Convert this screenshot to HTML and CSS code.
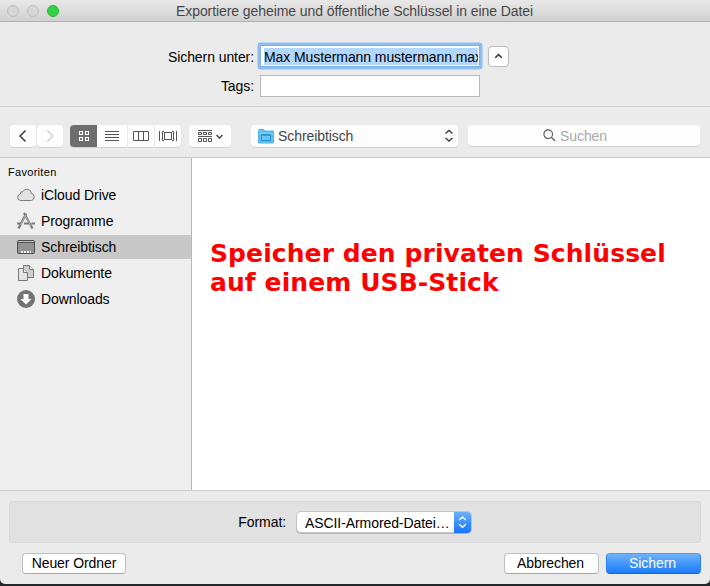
FILE: index.html
```html
<!DOCTYPE html>
<html lang="de">
<head>
<meta charset="utf-8">
<title>Exportiere Schlüssel</title>
<link rel="stylesheet" href="styles.css">
</head>
<body>
<div class="window">
  <header class="titlebar">
    <div class="lights"><i></i><i></i><i class="zoom"></i></div>
    <h1>Exportiere geheime und öffentliche Schlüssel in eine Datei</h1>
  </header>

  <section class="naming">
    <label class="name-label">Sichern unter:</label>
    <div class="field focused"><span class="selection">Max Mustermann mustermann.max</span></div>
    <button class="expand"><svg width="19" height="19" viewBox="0 0 19 19"><path d="M6.2 10.8 9.5 7.6l3.3 3.2" fill="none" stroke="#333" stroke-width="1.5"/></svg></button>
    <label class="tags-label">Tags:</label>
    <div class="field"></div>
  </section>

  <nav class="toolbar">
    <div class="group history">
      <button><svg width="26" height="22"><path d="M15.5 5.500 10 11l5.500 5.500" fill="none" stroke="#444" stroke-width="1.6"/></svg></button>
      <button><svg width="26" height="22"><path d="M10.500 5.500 16 11l-5.500 5.500" fill="none" stroke="#ccc" stroke-width="1.4"/></svg></button>
    </div>
    <div class="group views">
      <button class="active"><svg width="27" height="22"><path d="M9.500 6.500h3v3h-3zM15.500 6.500h3v3h-3zM9.500 12.500h3v3h-3zM15.500 12.500h3v3h-3z" fill="none" stroke="#fff" stroke-width="1.100"/></svg></button>
      <button class="wide"><svg width="30" height="22"><path d="M8 6.500h14M8 9.500h14M8 12.500h14M8 15.500h14" fill="none" stroke="#555"/></svg></button>
      <button><svg width="26" height="22"><path d="M5.500 6.500h15v9h-15zM10.500 6.500v9M15.500 6.500v9" fill="none" stroke="#555"/></svg></button>
      <button><svg width="26" height="22"><path d="M4.500 6v10M21.500 6v10M9 6.500H7.500v9H9M17 6.500h1.500v9H17M9.500 7.500h7v7h-7z" fill="none" stroke="#555"/></svg></button>
    </div>
    <button class="arrange"><svg width="42" height="22"><path d="M9 5.500h14M9 11.500h14M9.500 7.500h3v2h-3zM14.500 7.500h3v2h-3zM19.500 7.500h3v2h-3zM9.500 13.500h3v3h-3zM14.500 13.500h3v3h-3zM19.500 13.500h3v3h-3z" fill="none" stroke="#555"/><path d="m27.500 10 3 3 3-3" fill="none" stroke="#555" stroke-width="1.600"/></svg></button>
    <div class="location">
      <svg width="16" height="15" viewBox="0 0 16 15"><path d="M.5 1.500q0-1 1-1h4l1.500 1.500h8.500v12H.5z" fill="#62bfee" stroke="#59b1df"/><path d="M1 4.500h14" stroke="#86d3f8"/><path d="M3.500 5.500h9v6h-9z" fill="#66c8f8" stroke="#248dcb"/><path d="M4 6.500h8" stroke="#369fda"/></svg>
      <span>Schreibtisch</span>
      <svg class="updown" width="10" height="14"><path d="m1.500 4.500 3.500-3 3.500 3M1.500 9l3.500 3 3.500-3" fill="none" stroke="#444" stroke-width="1.500"/></svg>
    </div>
    <div class="search">
      <svg width="13" height="13"><circle cx="5.200" cy="5.200" r="4.300" fill="none" stroke="#555" stroke-width="1.100"/><path d="m8.400 8.400 3.600 3.400" stroke="#555" stroke-width="1.300"/></svg>
      <span>Suchen</span>
    </div>
  </nav>

  <main class="browser">
    <aside class="sidebar">
      <h2>Favoriten</h2>
      <ul>
        <li><svg width="20" height="18"><path d="M4.500 14.500A3.200 3.200 0 0 1 4.200 8.200 2.600 2.600 0 0 1 7 5.600 4.300 4.300 0 0 1 15.200 7.300 3.700 3.700 0 0 1 15.500 14.500z" fill="#e2e2e2" stroke="#7b7b7b"/></svg><span>iCloud Drive</span></li>
        <li><svg width="20" height="18"><path d="M1 11.500h3.500M8 11.500h5M15.500 11.500H19" fill="none" stroke="#777" stroke-width="2"/><path d="M2.500 16.500 10.200 1.500M8 1l8.500 15.500" fill="none" stroke="#777" stroke-width="2.200"/><path d="M4.500 13 9.700 3M9.500 4l5.500 10" fill="none" stroke="#c8c8c8" stroke-width=".7"/></svg><span>Programme</span></li>
        <li class="selected"><svg width="20" height="18"><rect x="1.500" y="2.500" width="17" height="13" rx="1" fill="#929292" stroke="#4c4c4c"/><path d="M2 4.500h16" stroke="#555"/><path d="M2 3.500h16" stroke="#bbb"/><path d="M5 14h2M8 14h2M11 14h2M14 14h1" stroke="#eee" stroke-width="2"/></svg><span>Schreibtisch</span></li>
        <li><svg width="20" height="18"><path d="M7.500 1.500h6l4 4v8h-10z" fill="#d0d0d0" stroke="#777"/><path d="M13.500 1.500v4h4" fill="#eee" stroke="#777"/><path d="M2.500 4.500h5l4 4v8h-9z" fill="#e4e4e4" stroke="#777"/><path d="M7.500 4.500v4h4" fill="#f5f5f5" stroke="#777"/></svg><span>Dokumente</span></li>
        <li><svg width="20" height="18"><circle cx="10" cy="9" r="9" fill="#737373"/><path d="M7.500 4h5v5H15.500L10 14.500 4.500 9h3z" fill="#fff"/></svg><span>Downloads</span></li>
      </ul>
    </aside>
    <div class="files"><p class="note">Speicher den privaten Schlüssel<br>auf einem USB-Stick</p></div>
  </main>

  <footer>
    <div class="accessory">
      <label class="format-label">Format:</label>
      <div class="select"><span>ASCII-Armored-Datei…</span><b><svg width="17" height="20"><path d="m5.200 8 3.300-3 3.300 3M5.200 12.300l3.300 3 3.300-3" fill="none" stroke="#fff" stroke-width="1.500"/></svg></b></div>
    </div>
    <div class="actions">
      <button class="push new">Neuer Ordner</button>
      <button class="push cancel">Abbrechen</button>
      <button class="push save">Sichern</button>
    </div>
  </footer>
</div>
</body>
</html>
```
FILE: styles.css
```css
* { box-sizing: border-box; }
body {
  margin: 0;
  height: 586px;
  overflow: hidden;
  background: #24272a;
  color: #000;
  font: 14px/16px "Liberation Sans", sans-serif;
  letter-spacing: -.08px;
}
button {
  display: block;
  margin: 0;
  padding: 0;
  border: 0;
  background: none;
  font: inherit;
  letter-spacing: inherit;
  color: inherit;
}
svg { display: block; flex: none; }
span { white-space: nowrap; }
h1, h2, p, ul { margin: 0; padding: 0; font: inherit; }

.window {
  display: flex;
  flex-direction: column;
  height: 584px;
  background: #ebebeb;
  border-radius: 0 0 5px 5px;
  overflow: hidden;
}

.titlebar {
  display: grid;
  grid-template-columns: 176px 1fr;
  align-items: center;
  height: 22px;
  padding-top: 1px;
  background: linear-gradient(#e8e8e8, #d1d1d1);
  border-bottom: 1px solid #b0b0b0;
  color: #464646;
}
.lights { display: flex; gap: 8px; padding-left: 7px; }
.lights i {
  width: 12px;
  height: 12px;
  border: 1px solid #bdbdbd;
  border-radius: 50%;
  background: #d7d7d7;
}
.lights .zoom { background: #33d143; border-color: #2bb339; }

.naming {
  display: grid;
  grid-template-columns: 254px 220px 21px;
  grid-template-rows: 22px 22px;
  column-gap: 6px;
  row-gap: 8px;
  align-items: center;
  height: 85px;
  padding-top: 23px;
  border-bottom: 1px solid #d0d0d0;
}
.naming label { text-align: right; padding-top: 2px; }
.naming .tags-label { padding-top: 0; }
.field { height: 22px; background: #fff; border: 1px solid #b8b8b8; }
.focused {
  padding: 2px 1px 2px 3px;
  border-color: #7eaee8;
  box-shadow: 0 0 0 2.500px #90bdf1;
  border-radius: 1px;
}
.selection { display: block; height: 17px; line-height: 19px; background: #b2d7fe; overflow: hidden; }
.expand {
  width: 21px;
  height: 21px;
  margin-left: 2px;
  background: #fff;
  border: 1px solid #bdbdbd;
  border-radius: 4px;
}

.toolbar {
  display: flex;
  align-items: flex-start;
  height: 51px;
  padding: 18px 0 0 10px;
  border-bottom: 1px solid #cbcbcb;
}
.group { display: flex; gap: 1px; }
.group button, .arrange, .location, .search {
  height: 22px;
  background: #fdfdfd;
  box-shadow: 0 1px 0 #d2d2d2;
}
.history button { width: 26px; border-radius: 4px; }
.views { margin-left: 7px; }
.views button:first-child { border-radius: 4px 0 0 4px; margin-right: -1px; }
.views button:last-child { border-radius: 0 4px 4px 0; }
.views .active { background: #6e6e6e; }
.arrange { margin-left: 8px; width: 42px; border-radius: 4px; }
.location {
  display: flex;
  align-items: center;
  width: 207px;
  margin-left: 20px;
  padding: 0 4px 0 7px;
  gap: 4px;
  border-radius: 4px;
  color: #444;
}
.updown { margin-left: auto; }
.search {
  display: flex;
  align-items: center;
  width: 232px;
  height: 21px;
  margin-left: 10px;
  padding-left: 75px;
  gap: 4px;
  border-radius: 4px;
  color: #aaa;
}
.search span { padding-top: 1px; }

.browser { display: grid; grid-template-columns: 192px 1fr; height: 332px; }
.sidebar { background: #efefef; border-right: 1px solid #b8b8b8; padding-top: 6px; }
h2 { padding-left: 8px; font-size: 11px; letter-spacing: .3px; height: 18px; }
ul { list-style: none; }
li { display: flex; align-items: center; gap: 5px; height: 26px; padding-left: 16px; }
.selected { height: 24px; margin: 1px 0; background: #c8c8c8; }
.files { background: #fff; padding: 81px 0 0 18px; }
.note {
  color: #f00;
  font: bold 25px/29px "DejaVu Sans", sans-serif;
  letter-spacing: .09px;
  white-space: nowrap;
}

footer { flex: 1; padding: 10px 9px 0; border-top: 1px solid #cdcdcd; }
.accessory {
  display: grid;
  grid-template-columns: 276px 176px;
  column-gap: 10px;
  align-items: center;
  height: 42px;
  background: #e1e1e1;
  border: 1px solid #d9d9d9;
  border-radius: 3px;
  margin-bottom: 10px;
}
.format-label { text-align: right; }
.select {
  display: grid;
  grid-template-columns: 1fr 17px;
  align-items: center;
  height: 20px;
  padding-left: 8px;
  background: #fff;
  border-radius: 4px;
  box-shadow: 0 0 0 1px #c5c5c5, 0 1px 0 1px #b5b5b5;
  margin: 0 1px;
}
.select b {
  width: 17px;
  height: 21px;
  border-radius: 0 4px 4px 0;
  background: linear-gradient(#6bb1fb, #1673fb);
}
.actions { display: flex; padding-left: 13px; }
.push {
  height: 21px;
  width: 95px;
  padding-bottom: 1px;
  background: #fff;
  border: 1px solid #c0c0c0;
  border-bottom-color: #a9a9a9;
  border-radius: 4px;
}
.new { width: 104px; }
.cancel { margin-left: auto; margin-right: 7px; padding-right: 2px; }
.save {
  padding-right: 2px;
  color: #fff;
  border-color: #4f9df3 #2a80ee #1464d8;
  background: linear-gradient(#6cb3fa, #1a7bfd);
}
```
